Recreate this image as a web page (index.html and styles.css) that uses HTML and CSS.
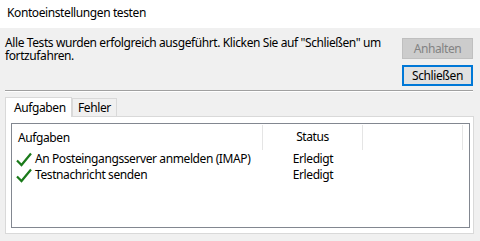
FILE: index.html
```html
<!DOCTYPE html>
<html lang="de">
<head>
  <meta charset="UTF-8">
  <title>Kontoeinstellungen testen</title>
  <link rel="stylesheet" href="styles.css">
</head>
<body>
  <div class="titlebar">Kontoeinstellungen testen</div>

  <div class="main">
    <div class="top">
      <p class="message">Alle Tests wurden erfolgreich ausgeführt. Klicken Sie auf "Schließen" um fortzufahren.</p>
      <div class="buttons">
        <button class="btn" disabled>Anhalten</button>
        <button class="btn default">Schließen</button>
      </div>
    </div>

    <div class="separator"></div>

    <div class="tabs">
      <div class="tab active">Aufgaben</div>
      <div class="tab">Fehler</div>
    </div>

    <div class="panel">
      <div class="listbox">
        <div class="row head">
          <div class="col task">Aufgaben</div>
          <div class="col status">Status</div>
          <div class="col rest"></div>
        </div>
        <div class="row">
          <div class="col task">
            <svg class="check" width="16" height="15" viewBox="0 0 16 15"><path d="M1 8.5 L5.5 13 L15 1.5" fill="none" stroke="#1a7a1a" stroke-width="2.2"/></svg>
            An Posteingangsserver anmelden (IMAP)
          </div>
          <div class="col status">Erledigt</div>
          <div class="col rest"></div>
        </div>
        <div class="row">
          <div class="col task">
            <svg class="check" width="16" height="15" viewBox="0 0 16 15"><path d="M1 8.5 L5.5 13 L15 1.5" fill="none" stroke="#1a7a1a" stroke-width="2.2"/></svg>
            Testnachricht senden
          </div>
          <div class="col status">Erledigt</div>
          <div class="col rest"></div>
        </div>
      </div>
    </div>
  </div>
</body>
</html>
```

FILE: styles.css
```css
* { box-sizing: border-box; }

body {
  margin: 0;
  width: 480px;
  height: 241px;
  overflow: hidden;
  background-color: #f0f0f0;
  color: #000;
  font-family: 'Noto Sans', 'Open Sans', sans-serif;
  font-size: 12px;
  letter-spacing: -0.4px;
}

.titlebar {
  height: 28px;
  line-height: 26px;
  padding-left: 7px;
  background-color: #fff;
}

.main {
  padding: 0 7px 0 5px;
}

.top {
  display: flex;
  justify-content: space-between;
  padding-top: 10px;
}

.message {
  margin: -2px 0 0 0;
  width: 380px;
  line-height: 13px;
}

.buttons {
  display: flex;
  flex-direction: column;
  gap: 6px;
}

.btn {
  width: 71px;
  height: 21px;
  padding: 0;
  font-family: inherit;
  font-size: 12px;
  letter-spacing: inherit;
  color: #000;
  background-color: #e1e1e1;
  border: 1px solid #adadad;
}

.btn:disabled {
  color: #838383;
  background-color: #cccccc;
  border-color: #bfbfbf;
}

.btn.default {
  border: 2px solid #0078d7;
}

.separator {
  margin-top: 4px;
  border-top: 1px solid #a0a0a0;
  border-bottom: 1px solid #fff;
  width: 468px;
}

/* Tabs */
.tabs {
  display: flex;
  align-items: flex-end;
  margin-top: 4px;
  height: 20px;
  position: relative;
  z-index: 1;
}

.tab {
  height: 18px;
  padding: 0 5px;
  line-height: 17px;
  border: 1px solid #d9d9d9;
  border-bottom: none;
  background-color: #f0f0f0;
}

.tab.active {
  height: 20px;
  width: 67px;
  padding: 0 0 0 8px;
  line-height: 19px;
  background-color: #fff;
  margin-bottom: -1px;
}

.panel {
  width: 469px;
  height: 118px;
  padding: 6px 3px 5px 5px;
  background-color: #fff;
  border: 1px solid #d9d9d9;
}

.listbox {
  height: 100%;
  border: 1px solid #828790;
  background-color: #fff;
}

.row {
  display: flex;
  height: 16px;
  line-height: 16px;
}

.row.head {
  height: 26px;
  line-height: 24px;
  padding-top: 1px;
  margin-bottom: 1px;
}

.col.task {
  width: 251px;
  padding-left: 6px;
  display: flex;
  align-items: center;
  white-space: nowrap;
}

.head .col {
  border-right: 1px solid #e5e5e5;
}

.head .col.rest {
  width: 100px;
  flex: none;
}

.col.status {
  width: 100px;
  text-align: center;
}

.col.rest {
  flex: 1;
}

.check {
  margin: 0 3px 0 -2px;
  flex: none;
}
```
